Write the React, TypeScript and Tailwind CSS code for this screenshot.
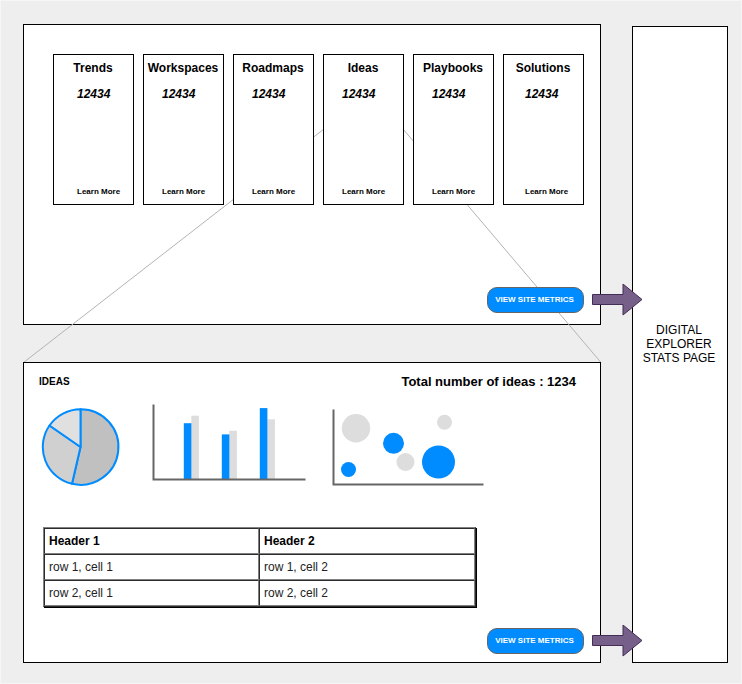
import type { ReactNode } from "react";

const FONT = "font-['Liberation_Sans',Arial,sans-serif]";

const cards = [
  { title: "Trends", shift: "pl-[23px]" },
  { title: "Workspaces", shift: "pl-[18px]" },
  { title: "Roadmaps", shift: "pl-[18px]" },
  { title: "Ideas", shift: "pl-[18px]" },
  { title: "Playbooks", shift: "pl-[18px]" },
  { title: "Solutions", shift: "pl-[21px]" },
];

function StatCard({ title, shift }: { title: string; shift: string }) {
  return (
    <article className="relative flex h-[151px] min-w-0 flex-1 flex-col border border-black bg-white pt-1.5 pr-px pb-[7px]">
      <h2 className="text-center text-[12px] leading-[14px] font-bold">{title}</h2>
      <p className={`${shift} mt-3 text-[12px] leading-[14px] font-bold italic`}>12434</p>
      <a href="#" className={`${shift} mt-auto text-[8px] leading-[10px] font-bold`}>
        Learn More
      </a>
    </article>
  );
}

function MetricsAction() {
  return (
    <div className="relative mt-auto self-end">
      <button
        type="button"
        className="block h-[26px] w-[97px] rounded-[10px] border border-[#666666] bg-[#008cff] pr-0.5 text-[8px] leading-[10px] font-bold text-white"
      >
        VIEW SITE METRICS
      </button>
      <svg className="absolute top-1/2 left-full z-10 ml-2 -translate-y-1/2" width="51" height="32" viewBox="0 0 51 32" aria-hidden="true">
        <path d="M.5 10.5H31V0L50 15.5 31 31V20.5H.5Z" fill="#76608a" stroke="#432d57" />
      </svg>
    </div>
  );
}

function Panel({ className, children }: { className: string; children: ReactNode }) {
  return (
    <section className={`relative flex min-h-[301px] flex-col border border-black bg-white ${className}`}>{children}</section>
  );
}

function CalloutLines() {
  return (
    <svg
      className="absolute -top-px -left-px h-[338px] w-[calc(100%+2px)] overflow-visible"
      viewBox="0 0 578 338"
      preserveAspectRatio="none"
      fill="none"
      stroke="#b3b3b3"
      aria-hidden="true"
    >
      <path d="M.5 338.5 301 105M380 105 578 338.5" />
    </svg>
  );
}

function PieChart() {
  return (
    <svg width="85" height="90" viewBox="41 400 85 90" role="img" aria-label="Pie chart" stroke="#008cff" strokeWidth="2" strokeLinejoin="round">
      <path d="M80.5 447V409.2A37.8 37.8 0 1 1 72 483.8Z" fill="#c0c0c0" />
      <path d="M80.5 447 72 483.8A37.8 37.8 0 0 1 49.5 425.5Z" fill="#d0d0d0" />
      <path d="M80.5 447 49.5 425.5A37.8 37.8 0 0 1 80.5 409.2Z" fill="#e0e0e0" />
    </svg>
  );
}

function BarChart() {
  return (
    <svg width="154" height="90" viewBox="152 400 154 90" role="img" aria-label="Bar chart">
      <g fill="#dddddd">
        <rect x="191.3" y="415.7" width="7.6" height="63.8" />
        <rect x="229.3" y="430.7" width="7.6" height="48.8" />
        <rect x="267.3" y="419.3" width="7.6" height="60.2" />
      </g>
      <g fill="#008cff">
        <rect x="183.8" y="423.2" width="7.6" height="56.3" />
        <rect x="221.8" y="434.4" width="7.6" height="45.1" />
        <rect x="259.8" y="408.1" width="7.6" height="71.4" />
      </g>
      <path d="M153.5 404.5V479.5H305.5" fill="none" stroke="#666666" strokeWidth="2" />
    </svg>
  );
}

function BubbleChart() {
  return (
    <svg width="152" height="90" viewBox="332 400 152 90" role="img" aria-label="Bubble chart">
      <g fill="#dddddd">
        <circle cx="356" cy="428.2" r="14.2" />
        <circle cx="444.5" cy="422.3" r="7.5" />
        <circle cx="405.5" cy="462" r="9" />
      </g>
      <g fill="#008cff">
        <circle cx="393.5" cy="443.3" r="10.5" />
        <circle cx="438.5" cy="462" r="16.5" />
        <circle cx="348.5" cy="469.5" r="7.5" />
      </g>
      <path d="M333.5 409.5V484.5H483.5" fill="none" stroke="#666666" strokeWidth="2" />
    </svg>
  );
}

const cell = "h-[26px] border border-t-[#2c2c2c] border-l-[#2c2c2c] border-r-[#808080] border-b-[#808080] px-1 py-0 text-left";

function DataTable() {
  return (
    <table className="mt-[37px] ml-1 w-[433px] table-fixed border-separate border-spacing-0 border border-t-[#808080] border-l-[#808080] border-r-[#2c2c2c] border-b-[#2c2c2c] text-[12px] leading-[14px] shadow-[1px_1px_0_#000]">
      <thead>
        <tr>
          <th className={`${cell} w-[215px] font-bold`}>Header 1</th>
          <th className={`${cell} font-bold`}>Header 2</th>
        </tr>
      </thead>
      <tbody className="text-[#222222]">
        <tr>
          <td className={cell}>row 1, cell 1</td>
          <td className={cell}>row 1, cell 2</td>
        </tr>
        <tr>
          <td className={cell}>row 2, cell 1</td>
          <td className={cell}>row 2, cell 2</td>
        </tr>
      </tbody>
    </table>
  );
}

export default function App() {
  return (
    <main className={`${FONT} flex min-h-screen gap-[31px] border border-[#f6f6f6] bg-[#eeeeee] pt-[23px] pr-[13px] pb-5 pl-[22px] text-black`}>
      <div className="flex min-w-0 flex-1 flex-col gap-[37px]">
        <Panel className="pt-[29px] pr-4 pb-[11px] pl-[29px]">
          <CalloutLines />
          <div className="flex gap-[9px]">
            {cards.map((card) => (
              <StatCard key={card.title} {...card} />
            ))}
          </div>
          <MetricsAction />
        </Panel>
        <Panel className="pt-3 pr-4 pb-2 pl-[15px]">
          <header className="flex items-center justify-between pr-2">
            <h2 className="text-[10px] leading-[14px] font-bold">IDEAS</h2>
            <p className="text-[13px] leading-[14px] font-bold">Total number of ideas : 1234</p>
          </header>
          <div className="mt-[11px] ml-0.5 flex gap-[26px]">
            <PieChart />
            <BarChart />
            <BubbleChart />
          </div>
          <DataTable />
          <MetricsAction />
        </Panel>
      </div>
      <aside className="mt-0.5 flex w-24 items-center justify-center border border-black bg-white pr-0.5 pb-0.5 text-center text-[12px] leading-[14px]">
        <p>
          DIGITAL
          <br />
          EXPLORER
          <br />
          STATS PAGE
        </p>
      </aside>
    </main>
  );
}
